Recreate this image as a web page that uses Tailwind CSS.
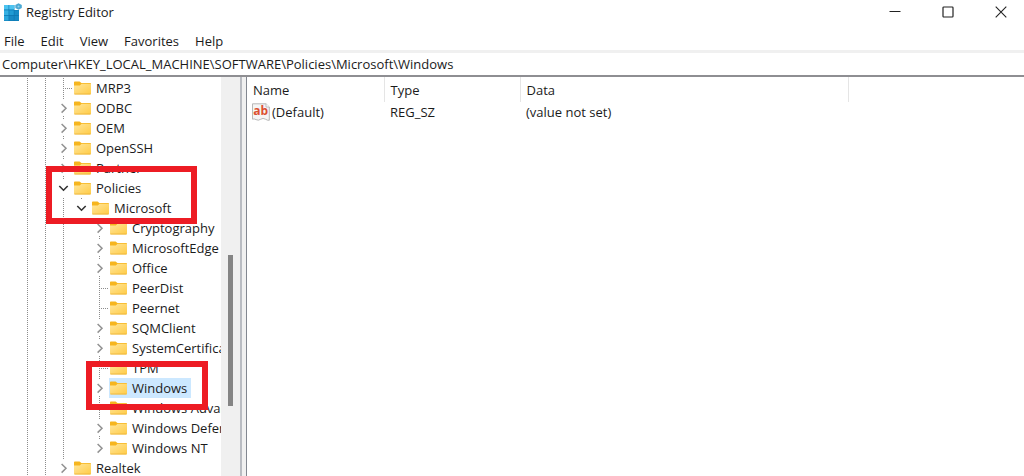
<!DOCTYPE html>
<html lang="en">
<head>
    <meta charset="UTF-8" />
    <meta name="viewport" content="width=device-width, initial-scale=1.0">
    <title>Registry Editor</title>
    <script src="https://cdn.jsdelivr.net/npm/@tailwindcss/browser@4"></script>
</head>
<body class="flex h-screen flex-col overflow-hidden bg-white font-['Open_Sans',sans-serif] text-[13px] leading-5 text-[#1b1b1b]">

    <!-- Shared shapes -->
    <svg class="absolute size-0">
        <defs>
            <linearGradient id="folder-fill" x1="0" y1="0" x2="1" y2="1">
                <stop offset="0" stop-color="#ffe69c" />
                <stop offset="1" stop-color="#ffcb45" />
            </linearGradient>
        </defs>
        <symbol id="folder" viewBox="0 0 17 14">
            <path d="M0 1.2Q0 .4.8.4H5.6L7.4 2H16.2Q17 2 17 2.8V6H0Z" fill="#f6b51e" />
            <path d="M0 4.4H5.8L7.6 2.8H17V12.6Q17 13.4 16.2 13.4H.8Q0 13.4 0 12.6Z" fill="url(#folder-fill)" />
            <path d="M.4 13H16.6" stroke="#eab33a" stroke-width=".8" />
        </symbol>
        <symbol id="closed" viewBox="0 0 18 20">
            <path d="M6.6 6L11 10.3L6.6 14.6" fill="none" stroke="#929292" stroke-width="1.5" />
        </symbol>
        <symbol id="open" viewBox="0 0 18 20">
            <path d="M4.3 8L8.5 12.2L12.7 8" fill="none" stroke="#333" stroke-width="1.6" />
        </symbol>
    </svg>

    <!-- Title bar -->
    <header class="flex h-6 shrink-0 items-center pl-1">
        <svg class="size-[18px]" viewBox="0 0 18 18">
            <path d="M0 2H10.4V7H15V18H0Z" fill="#0b76b0" />
            <path d="M0 2H4.6V6.6H0Z M5.2 2H10.4V6.6H5.2Z" fill="#4cc3f0" />
            <path d="M0 7.3H4.6V12H0Z" fill="#35b0e2" />
            <path d="M5.2 7.3H9.8V12H5.2Z" fill="#1f9bd4" />
            <path d="M10.4 7.3H15V12H10.4Z" fill="#168bc6" />
            <path d="M0 12.7H4.6V17.5H0Z" fill="#2aa6dc" />
            <path d="M5.2 12.7H9.8V17.5H5.2Z M10.4 12.7H15V17.5H10.4Z" fill="#1789c4" />
            <path d="M14.5 .2L17.8 1.9V5.1L14.5 6.8L11.3 5.1V1.9Z" fill="#4aa9d4" />
            <circle cx="14.5" cy="3.5" r="1" fill="#8fd0ec" />
        </svg>
        <h1 class="ml-1 flex-1">Registry Editor</h1>
        <div class="flex gap-[7px]">
            <button aria-label="Minimize" class="flex h-6 w-[46px] items-center justify-center">
                <svg class="size-3" viewBox="0 0 12 12"><path d="M.5 5.5H11.5" stroke="#222" /></svg>
            </button>
            <button aria-label="Maximize" class="flex h-6 w-[46px] items-center justify-center">
                <svg class="size-3" viewBox="0 0 12 12"><rect x="1" y="1" width="10" height="10" rx=".8" fill="none" stroke="#222" stroke-width="1.2" /></svg>
            </button>
            <button aria-label="Close" class="flex h-6 w-[46px] items-center justify-center">
                <svg class="size-3" viewBox="0 0 12 12"><path d="M.7.7L11.3 11.3M11.3.7L.7 11.3" stroke="#222" stroke-width="1.1" /></svg>
            </button>
        </div>
    </header>

    <!-- Menu -->
    <nav class="flex h-[26px] shrink-0 items-center gap-4 px-1 pt-2">
        <button>File</button>
        <button>Edit</button>
        <button>View</button>
        <button>Favorites</button>
        <button>Help</button>
    </nav>

    <!-- Address bar -->
    <div class="h-[25px] shrink-0 border-t-3 border-[#f0f0f0]">
        <input aria-label="Address" class="block h-[22px] w-full px-[2px] outline-none" value="Computer\HKEY_LOCAL_MACHINE\SOFTWARE\Policies\Microsoft\Windows">
    </div>

    <main class="relative flex min-h-0 flex-1 border-t-2 border-[#8e8e92]">
        <!-- Key tree -->
        <div class="flex w-[242px] shrink-0 border-r-2 border-[#b9bcc2]">
            <ul id="tree" role="tree" class="min-w-0 flex-1 overflow-hidden pt-px"></ul>
            <div class="w-[19px] bg-[#f0f0f0] pt-[178px] pl-[7px]">
                <div class="h-[151px] w-[5px] bg-[#858585]"></div>
            </div>
        </div>
        <div class="w-1 shrink-0 bg-[#f0f0f0]"></div>

        <!-- Values -->
        <section class="min-w-0 flex-1 border-l border-[#828790]">
            <table class="w-full table-fixed text-left">
                <thead>
                    <tr class="h-[25px]">
                        <th class="w-[137px] border-r border-[#e5e5e5] pl-[6px] font-normal">Name</th>
                        <th class="w-[136px] border-r border-[#e5e5e5] pl-[6px] font-normal">Type</th>
                        <th class="w-[328px] border-r border-[#e5e5e5] pl-[6px] font-normal">Data</th>
                        <th></th>
                    </tr>
                </thead>
                <tbody>
                    <tr>
                        <td class="pl-[5px]">
                            <div class="flex items-center gap-[2px]">
                                <svg class="h-[18px] w-[18px]" viewBox="0 0 18 18">
                                    <path d="M.5.8H14L17.3 4V17.3Q15.5 17.6 13.5 16.2Q11 14.6 8.8 16.2Q6.4 18 4 16.6Q2 15.4.5 16.2Z" fill="#f5f5f5" stroke="#b0b0b0" stroke-width=".9" />
                                    <path d="M14 .8V4H17.3" fill="#fff" stroke="#b0b0b0" stroke-width=".8" />
                                    <text x="8.6" y="12.2" text-anchor="middle" font-family="Open Sans" font-size="12" font-weight="700" fill="#dc5030">ab</text>
                                </svg>
                                (Default)
                            </div>
                        </td>
                        <td class="pl-[6px]">REG_SZ</td>
                        <td class="pl-[6px]">(value not set)</td>
                        <td></td>
                    </tr>
                </tbody>
            </table>
        </section>

        <!-- Highlight boxes -->
        <div class="pointer-events-none absolute top-[89px] left-[46px] h-[58px] w-[151px] border-6 border-[#ed1c24]"></div>
        <div class="pointer-events-none absolute top-[284px] left-[86px] h-[49px] w-[122px] border-6 border-[#ed1c24]"></div>
    </main>

    <script>
        // guides: one character per indent column, "|" draws a line and "." leaves it empty
        const keys = [
            { name: "MRP3", guides: "||", state: "leaf" },
            { name: "ODBC", guides: "||", state: "closed" },
            { name: "OEM", guides: "||", state: "closed" },
            { name: "OpenSSH", guides: "||", state: "closed" },
            { name: "Partner", guides: "||", state: "closed" },
            { name: "Policies", guides: "||", state: "open" },
            { name: "Microsoft", guides: "|||", state: "open", last: true },
            { name: "Cryptography", guides: "|||.", state: "closed" },
            { name: "MicrosoftEdge", guides: "|||.", state: "closed" },
            { name: "Office", guides: "|||.", state: "closed" },
            { name: "PeerDist", guides: "|||.", state: "leaf" },
            { name: "Peernet", guides: "|||.", state: "leaf" },
            { name: "SQMClient", guides: "|||.", state: "closed" },
            { name: "SystemCertificates", guides: "|||.", state: "closed" },
            { name: "TPM", guides: "|||.", state: "leaf" },
            { name: "Windows", guides: "|||.", state: "closed", selected: true },
            { name: "Windows Advanced Threat Protection", guides: "|||.", state: "leaf" },
            { name: "Windows Defender", guides: "|||.", state: "closed" },
            { name: "Windows NT", guides: "|||.", state: "closed", last: true },
            { name: "Realtek", guides: "||", state: "closed" }
        ];

        const cell = (body) => `<svg class="h-5 w-[18px] shrink-0" viewBox="0 0 18 20">${body}</svg>`;
        const line = (d) => `<path d="${d}" stroke="#8c8c8c" stroke-dasharray="1 1" />`;

        // The column just before the folder: a branch line or an expand arrow
        function branch(key) {
            if (key.state === "leaf") {
                return cell(line("M8.5 0V20") + line("M10 10.5H17"));
            }
            const below = key.last || key.state === "open" ? "" : line("M8.5 18V20");
            return cell(line("M8.5 0V2") + below + `<use href="#${key.state}" />`);
        }

        document.getElementById("tree").innerHTML = keys.map((key) => `
            <li role="treeitem" class="flex h-5 items-center pl-[19px] whitespace-nowrap">
                ${[...key.guides].map((g) => cell(g === "|" ? line("M8.5 0V20") : "")).join("")}
                ${branch(key)}
                <span class="flex h-5 items-center gap-[5px] px-px ${key.selected ? "bg-[#cce8ff] pr-1" : ""}">
                    <svg class="h-[14px] w-[17px] shrink-0"><use href="#folder" /></svg>${key.name}
                </span>
            </li>`).join("");
    </script>

</body>
</html>
